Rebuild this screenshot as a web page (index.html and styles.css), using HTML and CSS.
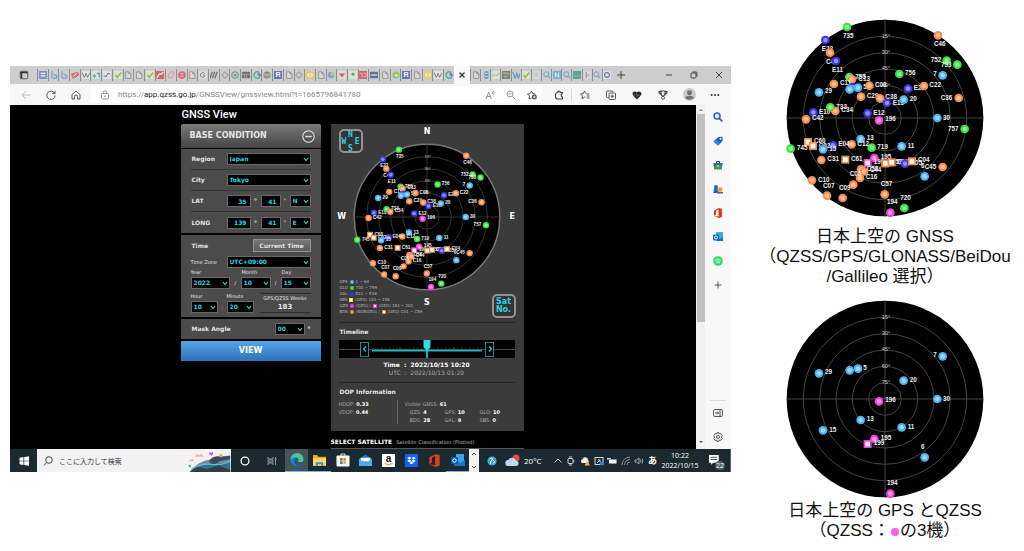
FILE: index.html
```html
<!DOCTYPE html>
<html lang="ja">
<head>
<meta charset="utf-8">
<title>GNSS View</title>
<link rel="stylesheet" href="styles.css">
</head>
<body>
<main class="page">
  <section class="window" aria-label="Browser">
    <header class="tabstrip">
      <span class="lead"><svg class="i10" viewBox="0 0 12 12"><rect x="1.5" y="1.5" width="9" height="9" rx="1.5" class="ln"/><path d="M1.5 3h9M3 3v7" class="ln thick"/></svg></span>
      <div class="tabs tabs-a" id="tabs-a"></div>
      <button class="tab-active" aria-label="Close tab"><svg class="i8" viewBox="0 0 8 8"><path d="M1.5 1.5l5 5M6.500 1.500l-5 5" class="ln heavy"/></svg></button>
      <div class="tabs tabs-b" id="tabs-b"></div>
      <button class="new-tab" aria-label="New tab"><svg class="i10" viewBox="0 0 10 10"><path d="M5 1v8M1 5h8" class="ln"/></svg></button>
      <div class="win-controls">
        <button aria-label="Minimize"><svg class="i8" viewBox="0 0 8 8"><path d="M1 4h6" class="ln"/></svg></button>
        <button aria-label="Restore"><svg class="i8" viewBox="0 0 8 8"><rect x="1" y="2" width="5" height="5" rx="1" class="ln"/><path d="M2.500 1H6a1 1 0 0 1 1 1v3.500" class="ln"/></svg></button>
        <button aria-label="Close"><svg class="i8" viewBox="0 0 8 8"><path d="M1 1l6 6M7 1l-6 6" class="ln"/></svg></button>
      </div>
    </header>

    <div class="toolbar">
      <div class="nav">
        <button aria-label="Back" class="dim"><svg class="i10" viewBox="0 0 10 10"><path d="M9.500 5H1M4.500 1.500L1 5l3.500 3.500" class="ln"/></svg></button>
        <button aria-label="Refresh"><svg class="i10" viewBox="0 0 10 10"><path d="M8.800 3.500A4.200 4.200 0 1 0 9.200 5.500M9 1v2.700H6.300" class="ln"/></svg></button>
        <button aria-label="Home"><svg class="i10" viewBox="0 0 10 10"><path d="M1 4.500L5 1l4 3.500V9H6.500V6.500a1.500 1.500 0 0 0-3 0V9H1z" class="ln"/></svg></button>
      </div>
      <div class="address">
        <svg class="i10 grey" viewBox="0 0 10 10"><rect x="1.500" y="3.500" width="7" height="5.500" rx="1" class="ln"/><path d="M3.300 3.500V2.500a1.700 1.700 0 0 1 3.400 0v1" class="ln"/><circle cx="5" cy="6.200" r=".8" fill="currentColor"/></svg>
        <a class="url" href="#">https://<b>app.qzss.go.jp</b>/GNSSView/gnssview.html?t=1665796841780</a>
        <button aria-label="Read aloud"><svg class="i10 grey" viewBox="0 0 10 10"><path d="M1 9l2.700-7 2.700 7M2 6.500h3.500M7 1.500q1 1 0 2.500M8.500 1q1.500 1.500 0 3.500" class="ln"/></svg></button>
        <button aria-label="Zoom"><svg class="i10 grey" viewBox="0 0 10 10"><circle cx="4" cy="4" r="3" class="ln"/><path d="M6.300 6.300L9.300 9.300M2.500 4h3" class="ln"/></svg></button>
        <button aria-label="Add favorite"><svg class="i10" viewBox="0 0 10 10"><path d="M4.500 8L2 9l.5-3L.5 4l2.700-.4L4.500 1l1.300 2.600 2.700.4" class="ln"/><circle cx="7.300" cy="7" r="2.500" fill="#555"/><path d="M7.300 5.700v2.600M6 7h2.600" stroke="#fff" stroke-width=".8"/></svg></button>
      </div>
      <div class="tools">
        <button aria-label="Extensions"><svg class="i10" viewBox="0 0 10 10"><path d="M8.500 3.500V2.500H6.300a1.300 1.300 0 0 0-2.600 0C2 2.500 1.500 3 1.500 4.500v2Q1.500 9 4 9h4.500V7a1.800 1.800 0 0 1 0-3.500" class="ln heavy"/></svg></button>
        <button aria-label="Favorites"><svg class="i10" viewBox="0 0 10 10"><path d="M5.500 7.700L4.500 7 2 9l.5-3L.5 4l2.700-.4L4.500 1l1.300 2.600M6.500 4h3M6.500 6h3M7 8h2.500" class="ln"/></svg></button>
        <button aria-label="Collections"><svg class="i10" viewBox="0 0 10 10"><path d="M2.500 7.500H1.500a1 1 0 0 1-1-1v-4.500a1 1 0 0 1 1-1H6a1 1 0 0 1 1 1" class="ln"/><rect x="3" y="3" width="6.500" height="6.500" rx="1" class="ln"/><path d="M6.200 4.500v3.500M4.500 6.200H8" class="ln"/></svg></button>
        <button aria-label="Health"><svg class="i10" viewBox="0 0 10 10"><path d="M5 9.500L1 5.300C-.8 2.500 3 0 5 2.500 7 0 10.800 2.500 9 5.300z" fill="#222"/><path d="M1 5h2.500l1-1.500 1 3L6.500 5H9" fill="none" stroke="#999" stroke-width=".6"/></svg></button>
        <button aria-label="Rewards"><svg class="i10" viewBox="0 0 10 10"><path d="M3 1h4v3a2 2 0 0 1-4 0zM3 1.500H1q0 2.500 2 2.800M7 1.500h2q0 2.500-2 2.800" class="ln heavy"/><circle cx="5" cy="7.800" r="1.500" class="ln"/></svg></button>
        <button aria-label="Profile"><svg class="i13" viewBox="0 0 12 12"><circle cx="6" cy="6" r="6" fill="#cbc8c6"/><circle cx="6" cy="4.300" r="2.300" fill="#77716d"/><path d="M2 9.500Q2.500 7.200 6 7.200T10 9.500Q6 12 2 9.500" fill="#77716d"/></svg></button>
        <button aria-label="Settings and more"><svg class="i10" viewBox="0 0 10 10"><g fill="#333"><circle cx="1.700" cy="5" r="1"/><circle cx="5" cy="5" r="1"/><circle cx="8.300" cy="5" r="1"/></g></svg></button>
      </div>
    </div>

    <div class="viewport">
      <div class="content">
        <div class="app">
          <h1 class="title">GNSS View</h1>
          <form class="conditions">
            <h2 class="head">BASE CONDITION <svg class="i13" viewBox="0 0 12 12"><circle cx="6" cy="6" r="5.300" fill="none" stroke="#ddd"/><path d="M3 6h6" stroke="#ddd" stroke-width="1.300"/></svg></h2>
            <div class="box rows">
              <div class="row"><label for="region">Region</label><select id="region" class="wide"><option>Japan</option></select></div>
              <div class="row"><label for="city">City</label><select id="city" class="wide"><option>Tokyo</option></select></div>
              <div class="row"><label for="lat">LAT</label><div class="coords"><input id="lat" value="35"><span>°</span><input aria-label="LAT minutes" value="41"><span>'</span><select aria-label="N or S"><option>N</option></select></div></div>
              <div class="row"><label for="long">LONG</label><div class="coords"><input id="long" value="139"><span>°</span><input aria-label="LONG minutes" value="41"><span>'</span><select aria-label="E or W"><option>E</option></select></div></div>
            </div>
            <div class="box time">
              <div class="time-head"><strong>Time</strong><button type="button" class="current">Current Time</button></div>
              <div class="zone"><label for="tz">Time Zone</label><select id="tz"><option>UTC+09:00</option></select></div>
              <div class="date">
                <label for="year">Year</label><span></span><label for="month" class="shift">Month</label><span></span><label for="day" class="shift">Day</label>
                <select id="year"><option>2022</option></select><span>/</span><select id="month"><option>10</option></select><span>/</span><select id="day"><option>15</option></select>
              </div>
              <div class="clock-row">
                <div class="hm">
                  <label for="hour">Hour</label><span></span><label for="minute">Minute</label>
                  <select id="hour"><option>10</option></select><span>:</span><select id="minute"><option>20</option></select>
                </div>
                <div class="weeks">GPS/QZSS Weeks<b>183</b></div>
              </div>
            </div>
            <div class="box mask"><label for="mask">Mask Angle</label><select id="mask"><option>00</option></select><span>°</span></div>
            <button type="button" class="view">VIEW</button>
          </form>

          <div class="results">
            <section class="panel">
              <div class="sky">
                <b class="pole north">N</b>
                <div class="middle"><b class="pole">W</b><svg class="plot plot-small" data-systems="gps glo gal qzs bds" viewBox="-300 -300 600 600" role="img" aria-label="Sky plot"></svg><b class="pole">E</b></div>
                <b class="pole">S</b>
                <button class="badge compass" aria-label="Compass"><span class="n">N</span><span class="w">W</span><span class="e">E</span><span class="s">S</span></button>
                <button class="badge satno">Sat<br>No.</button>
                <ul class="legend">
                  <li>GPS <i class="dot gps"></i> 1 ~ 64</li>
                  <li>GLO <i class="dot glo"></i> 700 ~ 799</li>
                  <li>GAL <i class="dot gal"></i> E01 ~ E36</li>
                  <li>SBS <i class="dot sq sbs"></i> (GEO) 120 ~ 158</li>
                  <li>QZS <i class="dot qzs"></i> (QZO) / <i class="dot sq qzs"></i> (GEO) 183 ~ 201</li>
                  <li>BDS <i class="dot bds"></i> (NONGEO) / <i class="dot sq bds"></i> (GEO) C01 ~ C59</li>
                </ul>
              </div>
              <div class="timeline">
                <h3>Timeline</h3>
                <div class="track">
                  <button class="step" aria-label="Earlier"><svg class="i8" viewBox="0 0 8 8"><path d="M5 1.500L2.500 4 5 6.500" class="ln heavy"/></svg></button>
                  <svg class="ruler" viewBox="0 0 110 17" preserveAspectRatio="none"><path d="M0 10h110" stroke="#27b5c5" stroke-width="1.500"/><path d="M1 8v2M28 7v3M55 7v3M82 7v3M109 8v2" stroke="#1c7782"/><path d="M1 8.500h108" stroke="#1c7782" stroke-dasharray="1 3"/><path d="M51.500 0h7v6.500l-2 2.500h-3l-2-2.500z" fill="#35dbea"/><path d="M55 8v9" stroke="#35dbea" stroke-width="1.500"/></svg>
                  <button class="step" aria-label="Later"><svg class="i8" viewBox="0 0 8 8"><path d="M3 1.500L5.500 4 3 6.500" class="ln heavy"/></svg></button>
                </div>
                <p class="now">Time&nbsp; :&nbsp; 2022/10/15 10:20</p>
                <p class="utc">UTC&nbsp; :&nbsp; 2022/10/15 01:20</p>
              </div>
              <div class="dop">
                <h3>DOP Information</h3>
                <div class="dop-grid">
                  <div class="dops"><p>HDOP: <b>0.33</b></p><p>VDOP: <b>0.44</b></p></div>
                  <div class="visible"><p>Visible GNSS: <b>61</b></p>
                    <div class="counts"><span>QZS: <b>4</b></span><span>GPS: <b>10</b></span><span>GLO: <b>10</b></span><span>BDS: <b>28</b></span><span>GAL: <b>9</b></span><span>SBS: <b>0</b></span></div>
                  </div>
                </div>
              </div>
            </section>
            <p class="select-sat"><b>SELECT SATELLITE</b> <span>Satellite Classification (Plotted)</span></p>
          </div>
        </div>
      </div>
      <div class="scrollbar"><span class="up"></span><span class="thumb"></span><span class="down"></span></div>
      <nav class="sidebar" aria-label="Sidebar">
        <button aria-label="Search"><svg class="i10" viewBox="0 0 10 10"><circle cx="4" cy="4" r="3" fill="#d9efff" stroke="#2468c8" stroke-width="1.500"/><path d="M6.300 6.300L9.300 9.300" stroke="#7436c8" stroke-width="1.700"/></svg></button>
        <button aria-label="Shopping"><svg class="i10" viewBox="0 0 10 10"><path d="M5.500 1L9.500.7 9.500 5 5 9.500 .5 5.500z" fill="#1b55c0"/><path d="M.5 5.500L3 3l4.500 4L5 9.500z" fill="#2e83e0"/><circle cx="7.500" cy="2.800" r="1" fill="#fff"/></svg></button>
        <button aria-label="Tools"><svg class="i10" viewBox="0 0 10 10"><path d="M3.500 3V1.500h3V3" fill="none" stroke="#1b4a86"/><rect x=".5" y="3" width="9" height="3" fill="#1d6ac1"/><rect x="1" y="5.500" width="8" height="4" fill="#3c9b50"/><rect x="4" y="5" width="2" height="2" fill="#f1c232"/></svg></button>
        <button aria-label="Games"><svg class="i10" viewBox="0 0 10 10"><circle cx="3" cy="3" r="2" fill="#2864c7"/><path d="M1.500 4h3L6 9H0z" fill="#2864c7"/><circle cx="7" cy="5.500" r="2.500" fill="#e9a73c"/><path d="M4 8h6v1.500H4z" fill="#6a4cb0"/></svg></button>
        <button aria-label="Office"><svg class="i10" viewBox="0 0 10 10"><path d="M1 2.500L6 0l3 1v8L6 10 1 8l4.500.5v-7L3 2.800v4L1 7.700z" fill="#dc3e19"/></svg></button>
        <button aria-label="Outlook"><svg class="i10" viewBox="0 0 10 10"><rect x="3" y="0" width="7" height="9" rx="1" fill="#38a9ec"/><path d="M4 5l3 2 3-2v4H4z" fill="#1577c8"/><rect x="0" y="2.500" width="6" height="6" rx="1" fill="#0f65b5"/><circle cx="3" cy="5.500" r="1.500" fill="none" stroke="#fff"/></svg></button>
        <button aria-label="Music"><svg class="i10" viewBox="0 0 10 10"><circle cx="5" cy="5" r="4.800" fill="#35d56e"/><path d="M2.200 3.500q3-1 5.600.4M2.500 5.200q2.600-.8 5 .3M3 6.800q2-.6 4 .2" fill="none" stroke="#d9ffe5" stroke-width=".8"/></svg></button>
        <button aria-label="Add"><svg class="i10" viewBox="0 0 10 10"><path d="M5 1.500v7M1.500 5h7" class="ln"/></svg></button>
        <span class="side-gap"></span>
        <button aria-label="Hide sidebar"><svg class="i10" viewBox="0 0 10 10"><rect x=".6" y="1.500" width="8.800" height="7" rx="1.300" class="ln"/><path d="M7 1.500v7M2 5h3.500M4.200 3.500L5.700 5 4.200 6.500" class="ln"/></svg></button>
        <button aria-label="Sidebar settings"><svg class="i10" viewBox="0 0 10 10"><path d="M4 .7h2l.4 1.300 1.500-.3 1.300 1.800L8.500 5l.7 1.500-1.300 1.800-1.500-.3L6 9.300H4l-.4-1.300-1.500.3L.8 6.500 1.500 5 .8 3.500l1.300-1.800 1.500.3z" class="ln"/><circle cx="5" cy="5" r="1.500" class="ln"/></svg></button>
      </nav>
    </div>

    <footer class="taskbar">
      <button class="start" aria-label="Start"><svg class="i10" viewBox="0 0 10 10"><path d="M.5 1.700L4.500 1v3.700h-4zM5.200.9L10 .2v4.500H5.200zM.5 5.300h4V9l-4-.7zM5.200 5.300H10v4.500L5.200 9.100z" fill="#fff"/></svg></button>
      <div class="search">
        <svg class="i10" viewBox="0 0 10 10"><circle cx="6" cy="4" r="3.300" class="ln"/><path d="M3.700 6.500L.8 9.500" class="ln"/></svg>
        <input aria-label="検索" placeholder="ここに入力して検索">
        <svg class="island" viewBox="0 0 124 66"><path d="M5 62Q25 35 68 28q18-14 30-8l26-4v50H5z" fill="#7c8898"/><path d="M60 34q10-18 32-14l32-2v10L92 34l-20 14z" fill="#394b61"/><path d="M2 66Q35 40 75 42l49-5v29z" fill="#27758f"/><path d="M8 57q28-18 60-14t56-10" fill="none" stroke="#58c2d6" stroke-width="4"/><path d="M5 64l20-14 30 8 34-12 35 14v6H5z" fill="#353c48"/><path d="M18 20h28l-7-8-9 3-7-2zM-2 34h20l-8-8z" fill="#e9b5b9"/><path d="M62 5l5 4 5-4 1 8-6 4-6-4z" fill="#db4be8"/><circle cx="96" cy="17" r="5" fill="#f6ad28"/><circle cx="3" cy="48" r="4" fill="#37c76b"/></svg>
      </div>
      <div class="sys"><button aria-label="Cortana"><svg class="i10" viewBox="0 0 10 10"><circle cx="5" cy="5" r="3.900" fill="none" stroke="#fff" stroke-width="1.300"/></svg></button><button aria-label="Task view"><svg class="i10" viewBox="0 0 10 10"><path d="M1 1v2h5V1M1 9V7h5v2M1 4h5v2H1zM8.500 1v8M8 3.500h1.500" fill="none" stroke="#aab0b3" stroke-width=".8"/></svg></button></div>
      <div class="apps">
        <button class="open focus" aria-label="Edge"><svg class="i14" viewBox="0 0 14 14"><path d="M.5 7A6.500 6.500 0 0 1 13.500 6q.3 3-3.500 3H8q2-3-1-4.500Q2.500 4 .5 7" fill="#43c9a1"/><path d="M.5 7Q2 3.500 6 4.300 4 6 5 9q1.500 3 6.500 2A6.500 6.500 0 0 1 .5 7" fill="#2087d8"/><path d="M5 6q-2 4 1 6 3 1.500 6-1-4 1-5.500-1.500Q5.500 8 6.500 6z" fill="#1554a5"/></svg></button>
        <button class="open" aria-label="Explorer"><svg class="i13" viewBox="0 0 12 12"><path d="M0 1h4l1 1.500h7V10H0z" fill="#e5a82b"/><rect y="4" width="12" height="7" fill="#ffd968"/><path d="M2.500 11V7.500h7V11H7.500V9.500h-3V11z" fill="#3b8fd6"/></svg></button>
        <button aria-label="Store"><svg class="i14" viewBox="0 0 14 14"><path d="M5 3V1h4v2" fill="none" stroke="#d6e6ef"/><rect x=".5" y="2.500" width="13" height="11" rx="1" fill="#fff"/><path fill="#eb5830" d="M4 5h2.700v2.700H4z"/><path fill="#76b82a" d="M7.300 5H10v2.700H7.300z"/><path fill="#1795dc" d="M4 8.300h2.700V11H4z"/><path fill="#f5b51b" d="M7.300 8.300H10V11H7.300z"/></svg></button>
        <button aria-label="Mail"><svg class="i13" viewBox="0 0 12 12"><path d="M0 4.500L6 .5l6 4V11H0z" fill="#1976c7"/><path d="M1.500 3.500h9V7h-9z" fill="#fff"/><path d="M0 4.500l6 3.700 6-3.700V11H0z" fill="#4aaef0"/></svg></button>
        <button aria-label="Amazon" class="amazon"><span><b>a</b><svg viewBox="0 0 10 3"><path d="M1 .5q4 2.500 8 0" fill="none" stroke="#e88a1a"/></svg></span></button>
        <button aria-label="Dropbox"><svg class="i13" viewBox="0 0 12 12"><rect width="12" height="12" fill="#1262fa"/><path d="M4 2.500l2 1.300-2 1.300-2-1.300zM8 2.500l2 1.300-2 1.300-2-1.300zM4 5.100l2 1.300-2 1.300-2-1.300zM8 5.100l2 1.300-2 1.300-2-1.300zM6 7l2 1.200L6 9.500 4 8.200z" fill="#fff"/></svg></button>
        <button aria-label="Office"><svg class="i13" viewBox="0 0 10 10"><path d="M1 2.500L6 0l3 1v8L6 10 1 8l4.500.5v-7L3 2.800v4L1 7.700z" fill="#dc3e19"/></svg></button>
        <button class="open" aria-label="Outlook"><svg class="i14" viewBox="0 0 14 14"><rect x="5" y="1" width="8" height="9" fill="#35a5e8"/><path d="M3 7l6 3 5-3v6H3z" fill="#1b74cb"/><rect x="0" y="4" width="7" height="7" rx="1" fill="#0d5eb2"/><circle cx="3.500" cy="7.500" r="1.700" fill="none" stroke="#fff"/></svg></button>
      </div>
      <div class="scroller"><svg class="i8" viewBox="0 0 8 8"><path d="M2 5l2-2 2 2" class="ln"/></svg><svg class="i8" viewBox="0 0 8 8"><path d="M2 3l2 2 2-2" class="ln"/></svg></div>
      <button class="help" aria-label="Help"><svg class="i10" viewBox="0 0 10 10"><circle cx="5" cy="5" r="4.600" fill="#3ba5dc"/><path d="M3 2.500Q6 1 5 4L3.500 6v2M6 4l2 2-2 1" fill="none" stroke="#fff"/></svg></button>
      <div class="weather"><svg class="sky-icon" viewBox="0 0 15 13"><circle cx="11" cy="4" r="3.500" fill="#e64b3c"/><path d="M3.500 12a3 3 0 0 1-.3-6A4.300 4.300 0 0 1 11 6.500a2.800 2.800 0 0 1 .5 5.500z" fill="#bcd6f4"/></svg>20°C</div>
      <div class="tray">
        <svg class="i10" viewBox="0 0 10 10"><path d="M1.500 6.500L5 3l3.500 3.500" class="wl"/></svg>
        <svg class="i10" viewBox="0 0 10 10"><rect x="2" y="2.500" width="5" height="5" rx="1" class="wl"/><path d="M3 1h3M3 9h3M7 5h1.500" class="wl"/></svg>
        <svg class="i10" viewBox="0 0 10 10"><path d="M2 7a2 2 0 0 1 .5-3.700A2.800 2.800 0 0 1 8 4a1.800 1.800 0 0 1 0 3z" fill="#eee"/><path d="M7.200 4.500L10 9.500H4.500z" fill="#f4bd2b"/></svg>
        <svg class="i10" viewBox="0 0 10 10"><rect x="1" y="1.500" width="8" height="7" class="wl"/><path d="M3 7l3-3M4 4h2v2" class="wl"/><circle cx="7.500" cy="7.500" r="2" fill="#2f7fd7"/></svg>
        <svg class="i10" viewBox="0 0 10 10"><rect x="2" y="3.500" width="7.500" height="4" fill="#fff"/><path d="M0 2.500h4M1 2v2" class="wl"/></svg>
        <svg class="i10" viewBox="0 0 10 10"><path d="M1 9A8 8 0 0 1 9 1M3.500 9A5.500 5.500 0 0 1 9 3.500M6 9a3 3 0 0 1 3-3" fill="none" stroke="#7f8a8e"/></svg>
        <svg class="i10" viewBox="0 0 10 10"><path d="M1 4v2h1.500L5 8V2L2.500 4zM6.500 3.500q1 1.500 0 3M8 2.500q2 2.500 0 5" class="wl thin"/></svg>
        <b>あ</b>
      </div>
      <div class="datetime"><span>10:22</span><span>2022/10/15</span></div>
      <button class="notify" aria-label="Notifications"><svg class="i13" viewBox="0 0 12 12"><path d="M0 1h9v7H4L2 10V8H0z" fill="#fff"/><path d="M1.500 3h6M1.500 5h6" stroke="#566"/></svg><span>22</span></button>
    </footer>
  </section>

  <aside class="figures">
    <figure>
      <svg class="plot plot-large" data-systems="gps glo gal qzs bds" viewBox="-300 -300 600 600" role="img" aria-label="GNSS"></svg>
      <figcaption>日本上空の GNSS<br>（QZSS/GPS/GLONASS/BeiDou<br>/Gallileo 選択）</figcaption>
    </figure>
    <figure class="tight">
      <svg class="plot plot-large" data-systems="gps qzs" viewBox="-300 -300 600 600" role="img" aria-label="GPS QZSS"></svg>
      <figcaption>日本上空の GPS とQZSS<br>（QZSS：<i class="spot"></i>の3機）</figcaption>
    </figure>
  </aside>
</main>
<script src="view.js"></script>
</body>
</html>
```

FILE: view.js
```js
// Satellites: system, x, y, name, label x, label y. Horizon radius is 295.
// A trailing "G" on the system marks a geostationary satellite.
const sats = [
  ['glo',-114,-273,'735',-126,-248],['gal',-179,-234,'E22',-190,-209],['bds',-165,-196,'C40',-177,-170],
  ['gal',-147,-171,'E11',-159,-146],['bds',159,-248,'C46',147,-222],['glo',185,-172,'752',137,-175],
  ['glo',217,-160,'753',168,-160],['glo',43,-132,'756',60,-135],['gps',173,-128,'7',145,-132],
  ['glo',-107,-123,'755',-89,-125],['bds',-99,-116,'C13',-80,-119],['bds',-153,-102,'C11',-135,-106],
  ['gps',-198,-77,'29',-180,-81],['gal',-98,-92,'',0,0],['gps',-106,-86,'',0,0],['gps',-81,-91,'5',-65,-95],
  ['bds',-47,-97,'C08',-30,-99],['gal',69,-88,'E24',86,-91],['bds',117,-96,'C22',133,-100],
  ['bds',-72,-64,'C29',-55,-66],['bds',-15,-59,'C38',1,-63],['gal',6,-45,'E15',23,-47],
  ['gps',56,-55,'20',74,-58],['bds',221,-60,'C36',167,-62],['gal',-215,-17,'E10',-198,-19],
  ['glo',-164,-32,'733',-146,-35],['bds',-149,-21,'C34',-131,-26],['bds',-237,4,'C42',-219,0],
  ['gal',-52,-14,'E12',-35,-17],['qzs',-18,7,'196',1,3],['gps',157,0,'30',174,-2],
  ['glo',239,33,'757',189,31],['gps',-73,63,'13',-55,60],['glo',-40,89,'719',-23,86],
  ['gps',50,85,'11',68,82],['bds',-100,79,'C12',-83,77],['gal',-156,82,'E04',-140,78],
  ['bdsG',-231,72,'C60',-213,69],['bdsG',-216,84,'C02',-199,82],['gps',-186,94,'15',-167,91],
  ['glo',-283,92,'745',-264,89],['bds',-191,126,'C31',-173,122],['bdsG',-119,125,'C61',-102,122],
  ['qzs',-32,120,'195',-13,116],['qzsG',-52,135,'199',-34,132],['bdsG',1,136,'C59',18,131],
  ['bdsG',20,133,'C01',36,131],['gal',60,137,'E05',77,134],['bdsG',81,130,'C04',99,126],
  ['bds',173,147,'C45',119,145],['gps',119,175,'6',108,142],['bds',-72,154,'C58',-55,152],
  ['bds',-63,160,'C44',-46,156],['bds',-75,180,'C16',-58,177],['bds',-95,200,'C06',-106,168],
  ['bds',-219,187,'C10',-201,184],['bds',-174,233,'C07',-186,202],['bds',-127,240,'C09',-138,209],
  ['bds',-1,229,'C57',-13,198],['glo',58,270,'720',46,239],['qzs',16,284,'194',6,252]
];

document.querySelectorAll('.plot').forEach(svg => {
  const systems = svg.dataset.systems.split(' ');
  let out = '<circle class="horizon" r="295"/>';
  for (let k = 1; k < 6; k++) out += `<circle class="ring" r="${k * 49}"/>`;
  out += '<path class="ring" d="M-295 0H295M0-295V295"/>';
  [15, 30, 45, 60, 75].forEach((deg, i) => {
    out += `<text class="deg" x="3" y="${-241 + i * 49}">${deg}°</text>`;
  });
  for (const [code, x, y, name, lx, ly] of sats) {
    const sys = code.slice(0, 3);
    if (!systems.includes(sys)) continue;
    out += code.length > 3
      ? `<rect class="${sys}" x="${x - 12}" y="${y - 12}" width="24" height="24"/><rect class="core" x="${x - 7}" y="${y - 7}" width="14" height="14"/>`
      : `<circle class="${sys}" cx="${x}" cy="${y}" r="13"/><circle class="glow" cx="${x}" cy="${y}" r="7"/>`;
    if (name) out += `<text class="name" x="${lx}" y="${ly + 7}">${name}</text>`;
  }
  svg.innerHTML = out;
});

// Tab icons
const letter = (t, c, bg = 'none') => `<rect width="10" height="10" fill="${bg}"/><text x="5" y="8" text-anchor="middle" font-size="9" font-weight="bold" fill="${c}">${t}</text>`;
const icons = {
  doc: '<path d="M2 1h4l2.500 2.500V9.500H2zM6 1v2.500h2.500" fill="#ddd" stroke="#777"/>',
  cal: '<rect width="10" height="10" fill="#6b7fd0"/><path d="M2 3h6M2 6h6" stroke="#fff" stroke-width="1.500"/>',
  b: '<path d="M2.500 0v8l3 1.500L8.500 8V6L4.500 4" fill="none" stroke="#58a6e0" stroke-width="1.700"/>',
  map: '<path d="M0 3l9-2 1 5-8 4z" fill="#d4675d"/><path d="M3 7l4-4" stroke="#fff"/>',
  w: '<rect width="10" height="10" fill="#e8e8e8"/><path d="M0 2l3 6 2-5 2 5 3-6" fill="none" stroke="#555"/>',
  plus: '<rect width="10" height="10" fill="#e3e8eb"/><path d="M1 6h4M3 4v5M6 3h3v5" fill="none" stroke="#3b93b5" stroke-width="1.500"/>',
  curve: '<rect width="10" height="10" fill="#e5e7ee"/><path d="M1 6q3 2 4-1t4-1" fill="none" stroke="#5365a5" stroke-width="1.300"/>',
  check: '<rect width="10" height="10" fill="#e1e6d0"/><path d="M2 5l2 3 5-6" fill="none" stroke="#75c92d" stroke-width="2"/>',
  red: '<rect width="10" height="10" fill="#d84a4a"/><path d="M1 9l3-5h3l2-3" fill="none" stroke="#fff" stroke-width="1.500"/>',
  ring: '<ellipse cx="5" cy="5" rx="3" ry="4.500" fill="none" stroke="#d98580" transform="rotate(35 5 5)"/>',
  ball: '<circle cx="5" cy="5" r="4.700" fill="#d9525c"/><path d="M3 3h4M3 5h4M3 7h4" stroke="#f4bcbc"/>',
  slash: '<path d="M0 9L3 1M3 9l3-8M6 9l3-8" stroke="#555" stroke-width="1.500"/>',
  dia: '<path d="M5 1l4 4-4 4-4-4z" fill="none" stroke="#999" stroke-width="1.500"/>',
  target: '<circle cx="5" cy="5" r="4" fill="none" stroke="#43aa82" stroke-width="1.500"/><circle cx="5" cy="5" r="2" fill="#d6606a"/>',
  grid: '<rect y="1" width="10" height="8" fill="#555"/><path d="M0 4h10M3 4v5M6 4v5" stroke="#aaa"/>',
  g: '<path d="M8 2a4 4 0 1 0 0 6V5H5" fill="none" stroke="#34a990" stroke-width="1.700"/><path d="M6 2l4 4" stroke="#3165c5" stroke-width="1.500"/>',
  g0: '<rect width="10" height="10" fill="#e3e3e3"/><path d="M7 3a3 3 0 1 0 0 4V5H5" fill="none" stroke="#555"/>',
  bands: '<circle cx="5" cy="5" r="4.500" fill="#6c7f6d"/><path d="M1 4h8M2 6h6" stroke="#e4d66c"/>',
  r: letter('R', '#fff', '#4c65aa'),
  yel: '<rect y="0" width="10" height="10" fill="#e5cd5d"/><path d="M4 3L2 5l2 2M6 3l2 2-2 2" fill="none" stroke="#fff" stroke-width="1.300"/>',
  multi: '<circle cx="5" cy="5" r="4" fill="#6e9ed9"/><path d="M5 1a4 4 0 0 1 4 4H5z" fill="#e9b748"/>',
  arrow: '<rect width="10" height="10" fill="#e3dfdf"/><path d="M1 3h8L5 8z" fill="#d44552"/>',
  dot: '<rect width="10" height="10" fill="#dfe7dd"/><circle cx="5" cy="4" r="2" fill="#43b34c"/>',
  rsq: '<rect width="10" height="10" fill="#cf5059"/><path d="M1 3h3v5M6 3h3v4H6" fill="none" stroke="#f4caca"/>',
  navy: '<rect y="1" width="10" height="8" fill="#465f7d"/><path d="M1 5h8" stroke="#c4d0df" stroke-width="2"/>',
  line: '<circle cx="5" cy="5" r="4.500" fill="#79c84b"/><path d="M3 5h4M5 7l2-2" stroke="#fff" stroke-width="1.500"/>',
  eight: '<rect x="3" width="5" height="10" rx="2" fill="#4f8ccb"/><path d="M4 3h3M4 7h3" stroke="#fff"/>',
  wave: '<rect width="10" height="10" fill="#dceadd"/><path d="M0 7l3-3 2 2 5-4" fill="none" stroke="#5ca866"/>',
  photo: '<rect width="10" height="10" fill="#596e68"/><path d="M1 3h8M2 7h5" stroke="#c59e61" stroke-width="2"/>',
  wp: '<path d="M1 1l3 8 2-6 2 6 2-6" fill="none" stroke="#438cc2" stroke-width="1.500"/>',
  lines: '<rect x="1" width="9" height="10" fill="#ddd"/><path d="M2 3h6M2 6h6" stroke="#aaa"/>',
  mag: '<circle cx="4" cy="4" r="3" fill="none" stroke="#57a2d5" stroke-width="1.300"/><path d="M6 6l3 3" stroke="#57a2d5" stroke-width="1.500"/>',
  n: '<rect width="10" height="10" fill="#61a9dc"/><path d="M3 8V2l4 6V2" fill="none" stroke="#fff"/>',
  teal: '<rect width="10" height="10" fill="#3d9a87"/><path d="M1 6h8" stroke="#83c1b4"/>',
  bar: '<rect x="1" width="8" height="10" fill="#ddd"/><path d="M4 1v8M6 5h2" stroke="#555"/>',
  circ: '<rect width="10" height="10" fill="#e3e3ed"/><circle cx="5" cy="5" r="3" fill="none" stroke="#5c6bac" stroke-width="1.500"/>'
};
const tabs = {
  'tabs-a': 'cal b b map w plus curve check doc doc check red ring ball doc g0 slash dia target grid g bands r doc dia yel doc multi arrow dot rsq navy doc line r doc yel w g',
  'tabs-b': 'doc eight wave photo wp check lines mag n mag teal bar mag circ'
};
for (const [id, list] of Object.entries(tabs)) {
  document.getElementById(id).innerHTML = list.split(' ')
    .map((k, i) => `<button class="tab" aria-label="Tab ${i + 1}"><svg viewBox="0 0 10 10">${icons[k]}</svg></button>`).join('');
}
```

FILE: styles.css
```css
* { box-sizing: border-box; }
body { margin: 0; background: #fff; font-family: "Liberation Sans", "Noto Sans CJK JP", sans-serif; }
h1, h2, h3, p, ul, figure { margin: 0; padding: 0; }
ul { list-style: none; }
button, input, select { margin: 0; padding: 0; border: 0; background: none; font: inherit; color: inherit; min-width: 0; }
svg { display: block; flex: none; }

.page { display: grid; grid-template-columns: minmax(0, 1fr) 250px; gap: 29px; padding: 0 14px 0 10px; align-items: start; }
.window { margin-top: 66px; color: #444; }

.ln { fill: none; stroke: currentColor; stroke-width: 0.9; }
.thick { stroke-width: 1.8; }
.heavy { stroke-width: 1.2; }
.wl { fill: none; stroke: #e4e8ea; stroke-width: 0.9; }
.thin { stroke: #aab2b5; }
.i8 { width: 8px; height: 8px; }
.i10 { width: 10px; height: 10px; }
.i13 { width: 13px; height: 13px; }
.i14 { width: 14px; height: 14px; }
.grey { color: #888; }

/* Tab strip */
.tabstrip { display: flex; height: 18px; background: #cdcdcd; align-items: stretch; color: #333; }
.tabstrip button { display: grid; place-items: center; }
.lead { width: 27px; display: grid; place-items: center; }
.tabs { display: flex; align-items: center; min-width: 0; }
.tabs-a { flex: 417; }
.tabs-b { flex: 142; }
.tab { flex: 1; height: 12px; border-left: 1px solid #8f8f8f; }
.tab svg { width: 8px; height: 8px; opacity: 0.8; }
.tab-active { width: 16px; background: #f9f9f9; }
.new-tab { width: 18px; }
.win-controls { display: flex; margin-left: 26px; }
.win-controls button { width: 25px; }

/* Toolbar */
.toolbar { display: flex; height: 21px; background: #f7f7f7; align-items: center; }
.toolbar button { display: grid; place-items: center; }
.nav { display: flex; width: 81px; padding-left: 3px; }
.nav button { width: 25px; }
.dim { opacity: 0.35; }
.address { flex: 1; min-width: 0; display: flex; align-items: center; height: 17px; background: #fff; padding-left: 9px; }
.address button { width: 21px; }
.url { flex: 1; min-width: 0; margin-left: 8px; font: 8px/16px Roboto, sans-serif; color: #888; text-decoration: none; white-space: nowrap; overflow: hidden; }
.url b { font-weight: 400; color: #222; }
.tools { display: flex; padding: 0 3px 0 4px; }
.tools button { width: 26px; }
.tools button:first-child { border-right: 1px solid #ddd; }

/* Viewport */
.viewport { display: flex; background: #f8f8f8; }
.content { flex: 1; min-width: 0; background: #000; }
.app { display: grid; grid-template-columns: 140px 193px; column-gap: 10px; justify-content: center; padding-right: 2px; font: 6px/8px "DejaVu Sans", sans-serif; color: #e4e4e4; }
.title { grid-column: 1 / -1; font: 500 11px/19px Roboto, sans-serif; color: #fff; padding-left: 1px; }
.conditions { display: flex; flex-direction: column; gap: 2px; }
.head { display: flex; align-items: center; justify-content: space-between; height: 24px; padding: 0 6px 0 9px; margin-bottom: -1px; font-size: 8px; background: linear-gradient(#7a7a7a, #444); border-radius: 2px 2px 0 0; }
.box { background: #4b4b4b; padding: 0 10px; }
.app select, .app input { height: 12px; background: #000; border: 1px solid #686868; color: #2bd4e2; font: bold 6px/8px "DejaVu Sans", sans-serif; border-radius: 0; }
.app select { appearance: none; padding: 0 2px; background: #000 url("data:image/svg+xml,%3Csvg xmlns='http://www.w3.org/2000/svg' viewBox='0 0 6 5'%3E%3Cpath d='M1 1l2 2.500L5 1' fill='none' stroke='%232bd4e2' stroke-width='1.200'/%3E%3C/svg%3E") no-repeat right 1px center / 6px 5px; }
.app input { text-align: right; padding: 0 3px; width: 100%; }
.row { display: grid; grid-template-columns: 36px 1fr; align-items: center; height: 21px; border-bottom: 1px solid #333; font-weight: bold; }
.row:last-child { border-bottom: 0; }
.row label { padding-left: 1px; }
.coords { display: grid; grid-template-columns: 24px 10px 20px 9px 1fr; text-align: center; align-items: center; }
.time { padding-top: 4px; padding-bottom: 4px; }
.time-head { display: flex; justify-content: space-between; align-items: center; padding-left: 1px; }
.current { width: 58px; height: 13px; border: 1px solid #929292; background: linear-gradient(#777, #5c5c5c); font-weight: bold; }
.zone { display: grid; grid-template-columns: 36px 1fr; align-items: center; margin-top: 4px; font-size: 5px; padding-left: 0; }
.date { display: grid; grid-template-columns: 39px 11px 30px 10px 30px; text-align: center; align-items: center; font-size: 5px; }
.date label, .hm label { text-align: left; line-height: 9px; }
.date .shift { padding-left: 1px; }
.clock-row { display: flex; justify-content: space-between; align-items: center; margin-top: 3px; }
.hm { display: grid; grid-template-columns: 27px 9px 27px; text-align: center; align-items: center; font-size: 5px; }
.weeks { width: 51px; border: solid #2e2e2e; border-width: 1px 0; font-size: 5px; text-align: center; white-space: nowrap; }
.weeks b { display: block; font-size: 7px; line-height: 10px; }
.mask { display: flex; align-items: center; height: 20px; font-weight: bold; padding-left: 11px; }
.mask select { width: 30px; margin: 0 3px 0 auto; }
.view { height: 20px; background: linear-gradient(#55a4e6, #2d73ba); color: #fff; font-size: 8px; font-weight: bold; }

.panel { background: #3b3b3b; }
.sky { position: relative; padding-bottom: 11px; text-align: center; }
.pole { display: block; font-size: 8px; line-height: 16px; color: #fff; }
.middle { display: flex; align-items: center; justify-content: center; margin: 3px 0 4px; }
.middle .pole { flex: 1; }
.badge { position: absolute; width: 24px; height: 24px; border: 2px solid #929292; border-radius: 5px; color: #2bd4e2; background: #333; font: bold 7px/8px "DejaVu Sans", sans-serif; }
.compass { left: 8px; top: 5px; display: grid; grid-template-columns: 1fr 1fr 1fr; place-items: center; font: bold 8px/7px "DejaVu Sans Mono", monospace; }
.n, .s { grid-column: 2; }
.n { grid-row: 1; }
.w { grid-column: 1; grid-row: 2; }
.e { grid-column: 3; grid-row: 2; }
.s { grid-row: 3; }
.satno { right: 8px; bottom: 4px; font-size: 8px; }
.legend { position: absolute; left: 9px; bottom: 7px; text-align: left; font-size: 4px; line-height: 6px; color: #bbb; white-space: nowrap; }
.legend li { display: flex; align-items: center; gap: 2px; height: 6px; }
.dot { width: 4px; height: 4px; border-radius: 50%; }
.sq { border-radius: 0; border: 1px solid; background: #fff; }
.dot.gps { background: #4ab4f5; }
.dot.glo { background: #33e63a; }
.dot.gal { background: #3c34e8; }
.dot.qzs { background: #f43fd8; }
.dot.bds { background: #f98d47; }
.dot.sq { background: #fff; border-color: #e8e04c; }
.dot.sq.qzs { border-color: #f43fd8; }
.dot.sq.bds { border-color: #f98d47; }

.timeline, .dop { margin: 0 9px 0 8px; border-top: 1px solid #262626; }
.panel h3 { font-size: 6px; line-height: 10px; padding: 4px 0 3px 1px; }
.track { display: flex; height: 18px; align-items: center; justify-content: center; gap: 3px; background: linear-gradient(#000 9px, #444 9px, #444 10px, #000 10px); }
.ruler { width: 110px; height: 18px; }
.step { width: 9px; height: 15px; border: 1px solid #1c8c98; background: #000; color: #2bd4e2; display: grid; place-items: center; }
.now { text-align: center; font-weight: bold; line-height: 8px; margin-top: 3px; color: #fff; }
.utc { text-align: center; line-height: 8px; color: #aaa; padding-bottom: 5px; }
.dop { padding-bottom: 7px; }
.dop-grid { display: grid; grid-template-columns: 58px 1fr; font-size: 5px; line-height: 8px; color: #aaa; }
.dop-grid b { color: #fff; }
.visible { border-left: 1px solid #666; padding-left: 7px; }
.counts { display: grid; grid-template-columns: 1fr 1fr 1fr; padding-left: 5px; }
.select-sat { display: flex; gap: 4px; align-items: center; margin-top: 5px; line-height: 12px; height: 13px; border-bottom: 1px solid #555; white-space: nowrap; color: #fff; }
.select-sat span { font-size: 5px; color: #bbb; }

.scrollbar { width: 9px; display: flex; flex-direction: column; align-items: center; background: #f1f1f1; padding: 4px 0; }
.up, .down { border: 2px solid transparent; }
.up { border-bottom: 2px solid #888; margin-bottom: 3px; margin-top: -2px; }
.down { border-top: 2px solid #555; margin-top: auto; }
.thumb { width: 8px; flex: 0 1 208px; background: #c1c1c1; }
.sidebar { width: 26px; display: flex; flex-direction: column; align-items: center; }
.sidebar button { width: 100%; height: 24px; display: grid; place-items: center; }
.side-gap { flex: 1; width: 16px; border-bottom: 1px solid #ddd; }

/* Taskbar */
.taskbar { display: flex; height: 23px; background: #1b2a30; color: #fff; }
.taskbar button { display: grid; place-items: center; }
.start { width: 27px; }
.search { flex: 1; min-width: 0; display: flex; align-items: center; background: #f2f2f2; color: #333; padding-left: 6px; }
.search input { flex: 1; margin-left: 6px; font: 7px/12px "Noto Sans CJK JP", sans-serif; }
.search input::placeholder { color: #333; opacity: 1; }
.island { width: 43px; height: 22px; }
.sys { display: flex; }
.sys button { width: 27px; }
.apps { display: flex; }
.apps button { width: 23px; border-bottom: 1px solid transparent; }
.apps .open { border-bottom-color: #76b9ed; }
.apps .focus { background: #45535a; }
.amazon span { width: 13px; height: 13px; background: #fff; color: #111; font-size: 10px; line-height: 9px; }
.amazon svg { width: 11px; height: 3px; margin: 0 1px; }
.scroller { width: 10px; background: #f4f4f4; color: #333; display: flex; flex-direction: column; align-items: center; justify-content: space-between; padding: 1px 0; }
.help { width: 26px; }
.weather { width: 46px; display: flex; align-items: center; gap: 4px; font: 8px/12px "Open Sans", sans-serif; }
.sky-icon { width: 15px; height: 13px; }
.tray { width: 108px; display: flex; align-items: center; justify-content: space-around; }
.tray b { font: bold 9px/12px "Noto Sans CJK JP", sans-serif; }
.datetime { width: 42px; display: flex; flex-direction: column; justify-content: center; text-align: center; font: 7px/10px "Open Sans", sans-serif; }
.notify { flex: none; width: 30px; position: relative; border-right: 1px solid #57646a; }
.notify span { position: absolute; right: 5px; bottom: 2px; min-width: 10px; border-radius: 5px; background: #4d5a60; font-size: 7px; line-height: 9px; }

/* Sky plots */
.plot { overflow: visible; font-family: "Liberation Sans", sans-serif; }
.plot-large { width: 200px; height: 200px; }
.plot-small { width: 148px; height: 148px; }
.horizon { fill: #000; }
.plot-small .horizon { stroke: #777; stroke-width: 6; }
.ring { fill: none; stroke: #444; stroke-width: 3; }
.deg { fill: #ccc; font-size: 17px; text-anchor: middle; }
.name { fill: #eee; font-size: 19px; font-weight: bold; }
.plot .gps { fill: #4ab4f5; }
.plot .glo { fill: #33e63a; }
.plot .gal { fill: #3c34e8; }
.plot .qzs { fill: #f43fd8; }
.plot .bds { fill: #f98d47; }
.core { fill: #fff; }
.glow { fill: #fff; opacity: 0.45; }

/* Figures */
.figures { padding-top: 18px; display: flex; flex-direction: column; gap: 12px; }
figure { display: flex; flex-direction: column; align-items: center; gap: 9px; }
figure.tight { gap: 2px; }
figcaption { font-size: 17px; line-height: 20px; color: #111; text-align: center; white-space: nowrap; }
.spot { display: inline-block; width: 8px; height: 8px; border-radius: 50%; background: #f95cf5; margin: 0 1px; }
```
